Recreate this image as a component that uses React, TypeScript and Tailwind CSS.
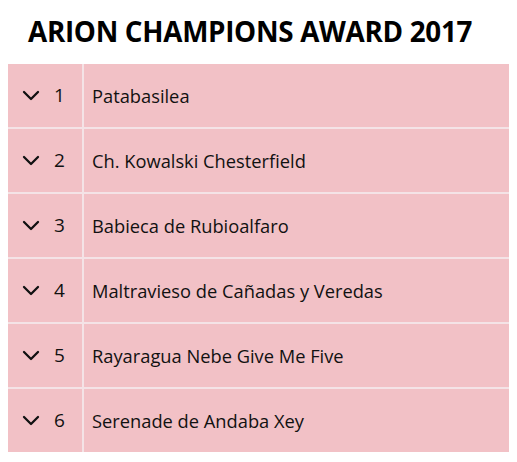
const champions = [
  "Patabasilea",
  "Ch. Kowalski Chesterfield",
  "Babieca de Rubioalfaro",
  "Maltravieso de Cañadas y Veredas",
  "Rayaragua Nebe Give Me Five",
  "Serenade de Andaba Xey",
];

function Chevron() {
  return (
    <svg width="18" height="11" viewBox="0 0 18 11" fill="none">
      <path d="M2 2l7 7 7-7" stroke="#111" strokeWidth="2.3" strokeLinecap="round" strokeLinejoin="round" />
    </svg>
  );
}

export default function App() {
  return (
    <div className="h-[462px] w-[517px] bg-white font-['Open_Sans',sans-serif]">
      <h1 className="pt-[11px] pl-[28px] text-[27.8px] leading-[40px] font-bold tracking-[-0.3px] text-black">
        ARION CHAMPIONS AWARD 2017
      </h1>
      <div className="mt-[13px] ml-[8px] flex w-[501px] flex-col gap-[2px] bg-[#f4e3e6]">
        {champions.map((name, i) => (
          <div key={name} className="flex h-[63px] gap-[2px]">
            <div className="flex w-[74px] items-center bg-[#f2c1c6] pl-[14px] text-[19px] text-[#111]">
              <Chevron />
              <span className="ml-[14px]">{i + 1}</span>
            </div>
            <div className="flex flex-1 items-center bg-[#f2c1c6] pl-[8px] text-[18.3px] text-[#111]">
              {name}
            </div>
          </div>
        ))}
      </div>
    </div>
  );
}
